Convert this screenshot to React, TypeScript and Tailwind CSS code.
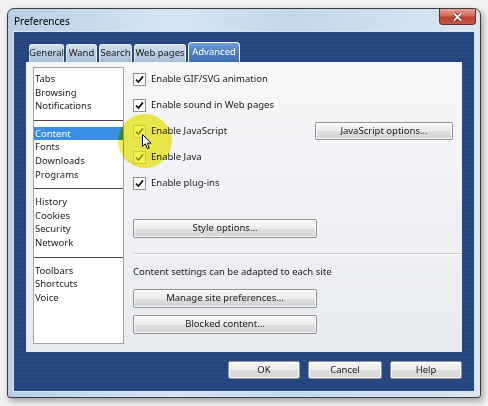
import React from 'react';

const btn =
    'flex items-center justify-center rounded-[2px] border border-[#8f9296] bg-[linear-gradient(180deg,#f7f7f7_0%,#ececec_50%,#dedede_51%,#d4d4d4_100%)] shadow-[inset_0_0_0_1px_rgba(255,255,255,0.75)] text-[#1a1a1a]';

function Check({ faded }: { faded?: boolean }) {
    return (
        <span
            className={
                'flex w-[13px] h-[13px] items-center justify-center border bg-white ' +
                (faded ? 'border-[#d6d6d6]' : 'border-[#8e8f8f]')
            }
        >
            <svg width="9" height="9" viewBox="0 0 9 9">
                <path
                    d="M1 4.6 L3.5 7 L8 1.4"
                    fill="none"
                    stroke={faded ? '#9a9a88' : '#111'}
                    strokeWidth="1.7"
                />
            </svg>
        </span>
    );
}

export default function App() {
    const tabs = [
        { name: 'General', w: 'w-[35px]' },
        { name: 'Wand', w: 'w-[31px]' },
        { name: 'Search', w: 'w-[33px]' },
        { name: 'Web pages', w: 'w-[52px]' },
    ];

    const groups = [
        ['Tabs', 'Browsing', 'Notifications'],
        ['Content', 'Fonts', 'Downloads', 'Programs'],
        ['History', 'Cookies', 'Security', 'Network'],
        ['Toolbars', 'Shortcuts', 'Voice'],
    ];

    const options = [
        { label: 'Enable GIF/SVG animation' },
        { label: 'Enable sound in Web pages' },
        { label: 'Enable JavaScript', faded: true, button: 'JavaScript options...' },
        { label: 'Enable Java', faded: true },
        { label: 'Enable plug-ins' },
    ];

    return (
        <div className="relative w-[488px] h-[406px] overflow-hidden bg-[#f1f1f1] pt-[8px] pl-[7px] font-['Noto_Sans',sans-serif] text-[9.5px] text-[#1a1a1a]">
            {/* Window */}
            <div className="w-[474px] h-[390px] flex flex-col rounded-t-[7px] rounded-b-[3px] border border-[#3c3c3c] bg-[linear-gradient(90deg,#b8cfe7_0%,#d6e5f3_35%,#c3d7eb_60%,#dae7f3_100%)] shadow-[2px_3px_6px_rgba(0,0,0,0.35)]">
                {/* Title bar */}
                <div className="h-[22px] flex items-start justify-between">
                    <span className="pl-[6px] pt-[5px] text-[10px] text-black">Preferences</span>
                    <div className="mr-[4px] w-[37px] h-[16px] flex items-center justify-center rounded-b-[4px] border border-t-0 border-[#6b2a22] bg-[linear-gradient(180deg,#e3a195_0%,#cf6a5a_45%,#b8402e_55%,#c95a48_100%)]">
                        <svg width="11" height="10" viewBox="0 0 11 10">
                            <path d="M2 1.5 L9 8.5 M9 1.5 L2 8.5" stroke="#5a2018" strokeWidth="3.4" />
                            <path d="M2 1.5 L9 8.5 M9 1.5 L2 8.5" stroke="#fff" strokeWidth="1.8" />
                        </svg>
                    </div>
                </div>

                {/* Client area */}
                <div className="flex-1 mx-[5px] mb-[5px] flex flex-col border border-[#d7e4f0] bg-[repeating-linear-gradient(180deg,#2b4c84_0px,#2b4c84_1px,#23427a_1px,#23427a_2px)]">
                    {/* Tabs */}
                    <div className="mt-[10px] pl-[15px] h-[20px] flex items-end gap-[2px]">
                        {tabs.map((t) => (
                            <div
                                key={t.name}
                                className={
                                    t.w +
                                    ' h-[18px] flex items-center justify-center rounded-t-[3px] border border-b-0 border-[#e6edf5] bg-[linear-gradient(180deg,#d3dfec_0%,#bccde1_50%,#a9bed7_100%)] text-[#1a1a1a]'
                                }
                            >
                                {t.name}
                            </div>
                        ))}
                        <div className="w-[52px] h-[20px] flex items-center justify-center rounded-t-[4px] border border-b-0 border-white bg-[linear-gradient(180deg,#6f9bd4_0%,#4f80c2_50%,#3f6fb2_100%)] text-white">
                            Advanced
                        </div>
                    </div>

                    {/* Panel */}
                    <div className="mx-[12px] h-[290px] flex pl-[7px] bg-[linear-gradient(180deg,#f6f7f9_0%,#eef0f3_60%,#e7eaee_100%)]">
                        {/* Category list */}
                        <div className="mt-[5px] w-[91px] h-[277px] border border-[#a3a3a3] bg-white pt-[4px]">
                            {groups.map((g, gi) => (
                                <div key={gi}>
                                    {gi > 0 && <div className="mt-[7px] mb-[6px] h-px bg-[#4a4a4a]" />}
                                    {g.map((item) => (
                                        <div
                                            key={item}
                                            className={
                                                'h-[13.6px] leading-[13.6px] pl-[1px] ' +
                                                (item === 'Content' ? 'bg-[#3b8ee6] text-white' : '')
                                            }
                                        >
                                            {item}
                                        </div>
                                    ))}
                                </div>
                            ))}
                        </div>

                        {/* Options */}
                        <div className="flex-1 ml-[9px] pr-[1px] pt-[4px] flex flex-col">
                            {options.map((o) => (
                                <div key={o.label} className="h-[26px] flex items-center">
                                    <Check faded={o.faded} />
                                    <span className="ml-[5px]">{o.label}</span>
                                    {o.button && (
                                        <div className={btn + ' ml-auto mr-[8px] w-[138px] h-[18px]'}>
                                            {o.button}
                                        </div>
                                    )}
                                </div>
                            ))}

                            <div className={btn + ' mt-[23px] w-[184px] h-[19px]'}>Style options...</div>

                            <div className="mt-[15px] border-t border-b border-t-[#cbcdd1] border-b-white" />

                            <div className="mt-[10px] leading-[14px]">Content settings can be adapted to each site</div>

                            <div className={btn + ' mt-[10px] w-[184px] h-[19px]'}>Manage site preferences...</div>
                            <div className={btn + ' mt-[7px] w-[184px] h-[19px]'}>Blocked content...</div>
                        </div>
                    </div>

                    {/* Dialog buttons */}
                    <div className="mt-[9px] pr-[12px] flex justify-end gap-[8px]">
                        <div className={btn + ' w-[72px] h-[18px]'}>OK</div>
                        <div className={btn + ' w-[74px] h-[18px]'}>Cancel</div>
                        <div className={btn + ' w-[72px] h-[18px]'}>Help</div>
                    </div>
                </div>
            </div>

            {/* Click highlight */}
            <div className="pointer-events-none absolute left-[118px] top-[114px] w-[54px] h-[54px] rounded-full bg-[#f3f04a] mix-blend-multiply" />
            <svg className="pointer-events-none absolute left-[142px] top-[134px]" width="10" height="16" viewBox="0 0 10 16">
                <path
                    d="M0.5 0.5 L0.5 12.5 L3.3 9.8 L5.4 14.8 L7.3 14 L5.3 9.2 L9 9.2 Z"
                    fill="#fff"
                    stroke="#000"
                    strokeWidth="1"
                    strokeLinejoin="round"
                />
            </svg>
        </div>
    );
}
